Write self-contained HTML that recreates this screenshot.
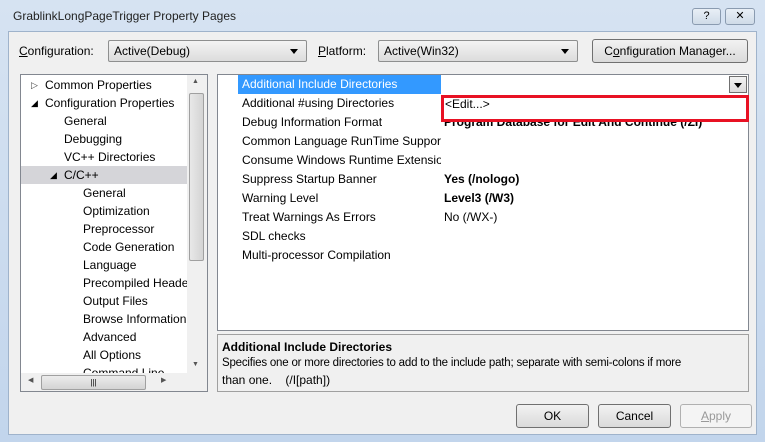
<!DOCTYPE html><html><head><style>
*{margin:0;padding:0;box-sizing:border-box}
body{width:765px;height:442px;overflow:hidden;background:linear-gradient(#d6e3f2,#c2d5ec);font-family:"Liberation Sans",sans-serif;font-size:12px;color:#000;position:relative}
.a{position:absolute}
.panel{left:8px;top:31px;width:749px;height:404px;background:#f0f0f0;border:1px solid #9fb3cb}
.combo{background:linear-gradient(#f4f4f4,#dcdcdc);border:1px solid #8e8f8f;border-radius:2px;height:22px;padding:3px 5px}
.combo:after{content:"";position:absolute;right:8px;top:8px;border:4px solid transparent;border-top:5px solid #000}
.btn{background:linear-gradient(#f2f2f2,#dadada);border:1px solid #707070;border-radius:3px;text-align:center;height:24px;line-height:22px}
.box{background:#fff;border:1px solid #828790}
.tr{position:absolute;height:18px;line-height:18px;white-space:nowrap}
.r{position:absolute;left:238px;height:19px;line-height:19px;white-space:nowrap;width:203px;overflow:hidden;padding-left:4px}
.v{position:absolute;left:444px;height:19px;line-height:19px;white-space:nowrap}
u{text-decoration:underline}
</style></head><body>
<div class="a" style="left:13px;top:9px;font-size:12px;color:#222">GrablinkLongPageTrigger Property Pages</div>
<div class="a" style="left:692px;top:8px;width:29px;height:17px;border:1px solid #8a9bb0;border-radius:3px;background:linear-gradient(#e9eff6,#cfdbe8);text-align:center;font-size:11px;line-height:15px">?</div>
<div class="a" style="left:725px;top:8px;width:30px;height:17px;border:1px solid #8a9bb0;border-radius:3px;background:linear-gradient(#e9eff6,#cfdbe8);text-align:center;font-size:11px;line-height:15px">✕</div>
<div class="a panel"></div>
<div class="a" style="left:19px;top:44px"><u>C</u>onfiguration:</div>
<div class="a combo" style="left:108px;top:40px;width:199px">Active(Debug)</div>
<div class="a" style="left:318px;top:44px"><u>P</u>latform:</div>
<div class="a combo" style="left:378px;top:40px;width:200px">Active(Win32)</div>
<div class="a btn" style="left:592px;top:39px;width:156px">C<u>o</u>nfiguration Manager...</div>

<div class="a box" style="left:20px;top:74px;width:188px;height:318px;overflow:hidden">
<div class="tr" style="left:10px;top:1px;font-size:9px;color:#444">▷</div><div class="tr" style="left:24px;top:1px">Common Properties</div>
<div class="tr" style="left:10px;top:19px;font-size:9px">◢</div><div class="tr" style="left:24px;top:19px">Configuration Properties</div>
<div class="tr" style="left:43px;top:37px">General</div>
<div class="tr" style="left:43px;top:55px">Debugging</div>
<div class="tr" style="left:43px;top:73px">VC++ Directories</div>
<div class="a" style="left:0;top:91px;width:166px;height:18px;background:#d5d5d9"></div>
<div class="tr" style="left:29px;top:91px;font-size:9px">◢</div><div class="tr" style="left:43px;top:91px">C/C++</div>
<div class="tr" style="left:62px;top:109px">General</div>
<div class="tr" style="left:62px;top:127px">Optimization</div>
<div class="tr" style="left:62px;top:145px">Preprocessor</div>
<div class="tr" style="left:62px;top:163px">Code Generation</div>
<div class="tr" style="left:62px;top:181px">Language</div>
<div class="tr" style="left:62px;top:199px">Precompiled Heade</div>
<div class="tr" style="left:62px;top:217px">Output Files</div>
<div class="tr" style="left:62px;top:235px">Browse Information</div>
<div class="tr" style="left:62px;top:253px">Advanced</div>
<div class="tr" style="left:62px;top:271px">All Options</div>
<div class="tr" style="left:62px;top:289px">Command Line</div>
<div class="a" style="left:166px;top:0;width:20px;height:298px;background:#f0f0f0"></div>
<div class="a" style="left:168px;top:18px;width:15px;height:168px;background:linear-gradient(90deg,#e8e8e8,#d4d4d4);border:1px solid #a0a0a0;border-radius:2px"></div>
<div class="a" style="left:171px;top:3px;font-size:7px;color:#555">▲</div>
<div class="a" style="left:171px;top:286px;font-size:7px;color:#555">▼</div>
<div class="a" style="left:0;top:298px;width:186px;height:18px;background:#f0f0f0"></div>
<div class="a" style="left:20px;top:300px;width:105px;height:15px;background:linear-gradient(#ececec,#d4d4d4);border:1px solid #a0a0a0;border-radius:2px;text-align:center;font-size:8px;line-height:13px">|||</div>
<div class="a" style="left:7px;top:301px;font-size:7px;color:#555">◀</div>
<div class="a" style="left:140px;top:301px;font-size:7px;color:#555">▶</div>
</div>

<div class="a box" style="left:217px;top:74px;width:532px;height:257px"></div>
<div class="a" style="left:238px;top:75px;width:203px;height:19px;background:#3399ff"></div>
<div class="r" style="top:75px;color:#fff">Additional Include Directories</div>
<div class="a" style="left:729px;top:76px;width:18px;height:17px;border:1px solid #707070;background:linear-gradient(#f2f2f2,#dcdcdc)"></div>
<div class="a" style="left:734px;top:83px;border:4px solid transparent;border-top:5px solid #000"></div>
<div class="r" style="top:94px">Additional #using Directories</div>
<div class="r" style="top:113px">Debug Information Format</div>
<div class="v" style="top:113px;font-weight:bold">Program Database for Edit And Continue (/ZI)</div>
<div class="r" style="top:132px">Common Language RunTime Support</div>
<div class="r" style="top:151px">Consume Windows Runtime Extension</div>
<div class="r" style="top:170px">Suppress Startup Banner</div><div class="v" style="top:170px;font-weight:bold">Yes (/nologo)</div>
<div class="r" style="top:189px">Warning Level</div><div class="v" style="top:189px;font-weight:bold">Level3 (/W3)</div>
<div class="r" style="top:208px">Treat Warnings As Errors</div><div class="v" style="top:208px">No (/WX-)</div>
<div class="r" style="top:227px">SDL checks</div>
<div class="r" style="top:246px">Multi-processor Compilation</div>
<div class="a" style="left:441px;top:95px;width:308px;height:27px;border:3px solid #e81123;background:#fff"></div>
<div class="a" style="left:445px;top:97px">&lt;Edit...&gt;</div>

<div class="a" style="left:217px;top:334px;width:532px;height:58px;border:1px solid #a0a0a0;background:#f0f0f0"></div>
<div class="a" style="left:222px;top:340px;font-weight:bold">Additional Include Directories</div>
<div class="a" style="left:222px;top:357px;white-space:nowrap;font-size:11.5px;letter-spacing:-0.2px">Specifies one or more directories to add to the include path; separate with semi-colons if more</div>
<div class="a" style="left:222px;top:373px">than one.&nbsp;&nbsp;&nbsp; (/I[path])</div>

<div class="a btn" style="left:516px;top:404px;width:73px">OK</div>
<div class="a btn" style="left:598px;top:404px;width:73px">Cancel</div>
<div class="a btn" style="left:680px;top:404px;width:72px;color:#999;border-color:#b0b0b0;background:#f4f4f4"><u>A</u>pply</div>
</body></html>
